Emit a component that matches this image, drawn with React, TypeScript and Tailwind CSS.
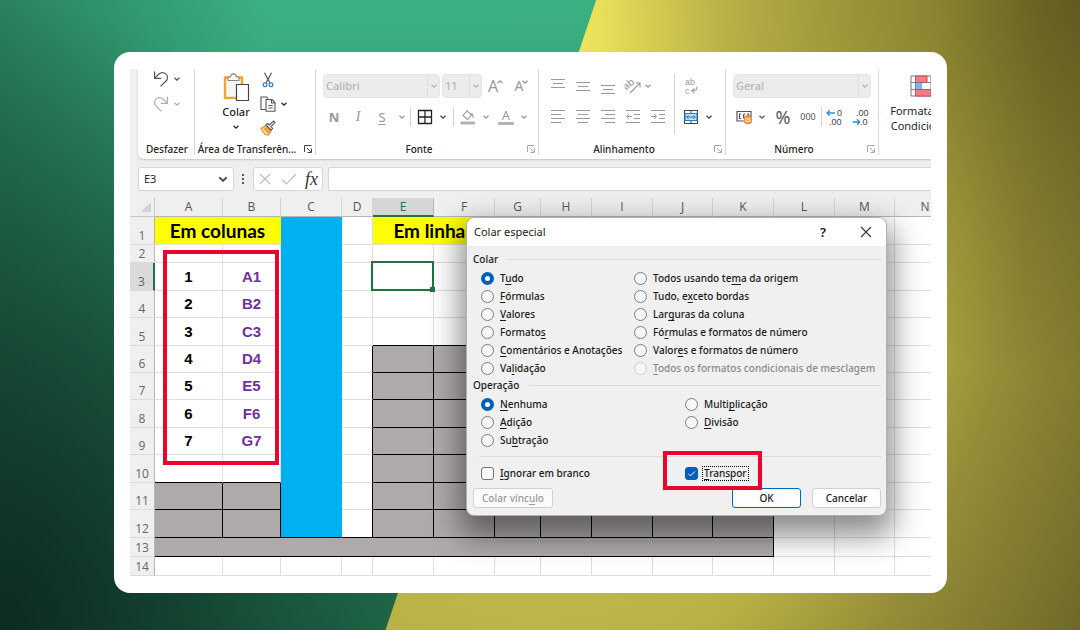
import React, { useState } from 'react';
import clsx from 'clsx';

type IconProps = { className?: string };

const Chevron = ({ className }: IconProps) => (
  <svg viewBox="0 0 8 8" className={clsx('w-2 h-2 shrink-0', className)} fill="none" stroke="currentColor" strokeWidth="1.3">
    <path d="M1.5 2.8 4 5.2 6.5 2.8" />
  </svg>
);

const Launcher = ({ className }: IconProps) => (
  <svg viewBox="0 0 10 10" className={clsx('w-2.5 h-2.5 shrink-0', className)} fill="none" stroke="currentColor">
    <path d="M1.5 8V1.5H8.5M3.8 3.8 8 8M8.5 4.5V8.5H4.5" />
  </svg>
);

const Undo = ({ className }: IconProps) => (
  <svg viewBox="0 0 16 16" className={clsx('w-4 h-4', className)} fill="none" stroke="currentColor" strokeWidth="1.2">
    <path d="M1.6.5v6.8h6.6M1.8 7.1 6 3A4.9 4.9 0 0 1 13 3.1 4.8 4.8 0 0 1 13 10L7.5 15.4" />
  </svg>
);

const Clipboard = () => (
  <svg viewBox="0 0 28 29" className="w-7 h-[29px]" fill="none">
    <path d="M3 4.5H20V25H3Z" fill="#f5f5f5" stroke="#eda53a" strokeWidth="2.4" />
    <path d="M6 7.5V4H8.5C9-.2 14-.2 14.5 4H17V7.5Z" fill="#fff" stroke="#888" strokeWidth="1.1" />
    <path d="M14.5 11.5H26.5V27.5H14.5Z" fill="#fff" stroke="#444" strokeWidth="1.2" />
  </svg>
);

const Scissors = () => (
  <svg viewBox="0 0 12 16" className="w-3 h-4" fill="none">
    <path d="M2.5.8 8 11M9.5.8 4 11" stroke="#555" strokeWidth="1.2" />
    <circle cx="3" cy="12.8" r="1.9" stroke="#2b7cc4" strokeWidth="1.2" />
    <circle cx="9" cy="12.8" r="1.9" stroke="#2b7cc4" strokeWidth="1.2" />
  </svg>
);

const Copy = () => (
  <svg viewBox="0 0 16 16" className="w-4 h-4 shrink-0" fill="none" stroke="#555" strokeWidth="1.1">
    <path d="M5.5 13.5H1V1H6.5L8 2.5" />
    <path d="M6 3.5H12L15 6.5V15.2H6ZM11.5 3.8V7H14.8M8.3 9.5H12.7M8.3 12H12.7" />
  </svg>
);

const Brush = () => (
  <svg viewBox="0 0 16 16" className="w-4 h-4" fill="none">
    <path d="M1 8.5 5.5 5.5 11 11 8.5 15 5 14.5 3.5 12.5Z" fill="#fbd9a5" stroke="#e8912d" strokeWidth="1.2" />
    <path d="M3.5 8.5 8.5 14 10 11 6 7Z" fill="#ef9a38" />
    <path d="M6 5 7.6 3.5 9.5 5 13.5 1 15 2.6 11 6.5 12.6 8.5 11.2 10.2Z" fill="#fff" stroke="#555" strokeWidth="1.1" />
  </svg>
);

const Borders = () => (
  <svg viewBox="0 0 16 16" className="w-4 h-4" fill="none" stroke="#222" strokeWidth="1.3">
    <path d="M1.5 1.5H14.5V14.5H1.5ZM8 1.5V14.5M1.5 8H14.5" />
  </svg>
);

const Bucket = () => (
  <svg viewBox="0 0 16 16" className="w-4 h-4" fill="none" stroke="#9a9a9a" strokeWidth="1.1">
    <path d="M7 2 3 6.5 7.5 10.5 11.5 6 7 2V.8M10.3 5C12 4.2 13 5.5 13 8.8" />
    <path d="M.5 12.5H15V15.5H.5Z" fill="#b3b3b3" stroke="none" />
  </svg>
);

const AlignIcon = ({ d }: { d: string }) => (
  <svg viewBox="0 0 14 16" className="w-3.5 h-4" fill="none" stroke="#9a9a9a">
    <path d={d} />
  </svg>
);

const Orientation = () => (
  <svg viewBox="0 0 18 16" className="w-[18px] h-4 shrink-0 overflow-visible" fill="none" stroke="#9a9a9a" strokeWidth="1.1">
    <text x="0" y="9" fontSize="10" fill="#9a9a9a" stroke="none" transform="rotate(-40 6 8)">ab</text>
    <path d="M6 15 15.5 5.5M11.5 5H16V9.5" />
  </svg>
);

const WrapText = () => (
  <svg viewBox="0 0 16 16" className="w-4 h-4 overflow-visible font-['Liberation_Sans',sans-serif]" fill="none" stroke="#9a9a9a" strokeWidth="1.1">
    <text x="2" y="7" fontSize="9" fill="#9a9a9a" stroke="none">ab</text>
    <text x="2" y="16" fontSize="9" fill="#9a9a9a" stroke="none">c</text>
    <path d="M13.5 8.5C15 11 13.5 12.8 9 12.8M11.5 10.3 8.8 12.8 11.5 15.3" />
  </svg>
);

const Merge = () => (
  <svg viewBox="0 0 16 16" className="w-4 h-4 shrink-0" fill="none">
    <path d="M1.5 1.5H14.5V14.5H1.5Z" fill="#fff" stroke="#444" strokeWidth="1.1" />
    <path d="M2 4.5H14V11.5H2Z" fill="#bfe1f6" stroke="#1f7fc0" strokeWidth="1.1" />
    <path d="M8 1.5V4M8 12V14.5" stroke="#444" />
    <path d="M3.8 8H12.2M5.5 6.2 3.7 8 5.5 9.8M10.5 6.2 12.3 8 10.5 9.8" stroke="#1f6fb0" />
  </svg>
);

const Currency = () => (
  <svg viewBox="0 0 16 14" className="w-4 h-3.5 shrink-0" fill="none">
    <path d="M1 1.5H15V11H1Z" fill="#fff" stroke="#555" strokeWidth="1.2" />
    <path d="M5 4H3.5V8.5H5M9 4.2C6.8 3.5 6.8 9 9 8.3M11 4H12.5V6" stroke="#555" strokeWidth="1.1" />
    <path d="M8.5 7C8.5 5.2 15.3 5.2 15.3 7V12C15.3 14 8.5 14 8.5 12Z" fill="#f6a04a" stroke="#d9771e" />
    <path d="M8.5 8.2C9.5 9.5 14.3 9.5 15.3 8.2M8.5 10.5C9.5 11.8 14.3 11.8 15.3 10.5" stroke="#fff" strokeWidth=".8" />
  </svg>
);

const Decimal = ({ grow }: { grow?: boolean }) => (
  <svg viewBox="0 0 16 16" className="w-4 h-4 overflow-visible font-['Liberation_Sans',sans-serif]" fill="none">
    <text x={grow ? 11 : 4} y="7" fontSize="9" fill="#444">{grow ? '0' : '.00'}</text>
    <text x={grow ? 3 : 8} y="16" fontSize="9" fill="#444">{grow ? '.00' : '.0'}</text>
    <path
      d={grow ? 'M9 4H1.2M3.8 1.2 1 4 3.8 6.8' : 'M.5 13H7.5M5 10.2 7.8 13 5 15.8'}
      stroke="#2b8fd0"
      strokeWidth="1.3"
    />
  </svg>
);

const ConditionalFormat = () => (
  <svg viewBox="0 0 24 22" className="w-6 h-[22px]" fill="none">
    <path d="M2 1H22V21H2Z" fill="#fff" stroke="#777" />
    <path d="M6.5 1H18V7.5H6.5ZM6.5 14.5H22V21H6.5Z" fill="#f77b86" stroke="#d8434f" />
    <path d="M6.5 8H13V14H6.5Z" fill="#7ab8ec" />
    <path d="M2 7.5H22M2 14.5H22M6.5 1V21" stroke="#777" strokeWidth=".9" />
  </svg>
);

const ToolButton = ({ label, className, children }: { label: string; className?: string; children: React.ReactNode }) => (
  <button type="button" aria-label={label} className={clsx('h-6 flex items-center shrink-0', className)}>
    {children}
  </button>
);

const RibbonGroup = ({ title, className, launcher, dim, children }: {
  title: string;
  className?: string;
  launcher?: boolean;
  dim?: boolean;
  children: React.ReactNode;
}) => (
  <section className={clsx('h-[86px] shrink-0 border-r border-[#d8d8d8] flex flex-col justify-between', className)}>
    <div>{children}</div>
    <div className="flex items-center h-3 pr-0.5">
      <h2 className="flex-1 text-center whitespace-nowrap">{title}</h2>
      {launcher && (
        <ToolButton label={`Configurações de ${title}`} className={clsx('pl-1', dim ? 'text-[#aaa]' : 'text-[#444]')}>
          <Launcher />
        </ToolButton>
      )}
    </div>
  </section>
);

const RibbonSelect = ({ label, value, className }: { label: string; value: string; className: string }) => (
  <div className={clsx('h-6 rounded-[4px] bg-[#ececec] border border-[#e6e6e6] flex items-center text-[#b4b4b4] text-[11px]', className)}>
    <select aria-label={label} disabled className="appearance-none flex-1 min-w-0 pl-0.5 opacity-100">
      <option>{value}</option>
    </select>
    <span className="w-3 h-full border-l border-[#dfdfdf] flex items-center justify-center">
      <Chevron />
    </span>
  </div>
);

const Divider = () => <span className="w-px h-5 shrink-0 bg-[#d4d4d4]" />;

const alignments = [
  { label: 'Alinhar à esquerda', d: 'M0 1.5H14M0 5.5H10M0 9.5H14M0 13.5H10' },
  { label: 'Centralizar', d: 'M0 1.5H14M2 5.5H12M0 9.5H14M2 13.5H12' },
  { label: 'Alinhar à direita', d: 'M0 1.5H14M4 5.5H14M0 9.5H14M4 13.5H14' },
  { label: 'Diminuir recuo', d: 'M0 1.5H14M8 5.5H14M8 9.5H14M0 13.5H14M6 7.5H.8M3 5 .8 7.5 3 10' },
  { label: 'Aumentar recuo', d: 'M0 1.5H14M8 5.5H14M8 9.5H14M0 13.5H14M0 7.5H5.5M3.3 5 5.5 7.5 3.3 10' },
];

const verticalAlignments = [
  { label: 'Alinhar em cima', d: 'M0 1.5H14M2 5.5H12M0 9.5H14' },
  { label: 'Alinhar no meio', d: 'M0 4.5H14M2 8.5H12M0 12.5H14' },
  { label: 'Alinhar embaixo', d: 'M0 7.5H14M2 11.5H12M0 15.5H14' },
];

const Ribbon = () => (
  <div className="ml-2 h-[90px] bg-white rounded-bl-md shadow-[0_1px_2px_#c4c4c4] flex overflow-hidden">
    <RibbonGroup title="Desfazer" className="w-[57px] pl-1">
      <div className="flex items-start pl-[11px] pt-0.5 text-[#555] h-6">
        <Undo />
        <Chevron className="ml-1 mt-1" />
      </div>
      <div className="flex items-start pl-[11px] pt-[3px] text-[#b0b0b0]">
        <Undo className="-scale-x-100" />
        <Chevron className="ml-1 mt-1" />
      </div>
    </RibbonGroup>

    <RibbonGroup title="Área de Transferên..." launcher className="w-[121px]">
      <div className="flex pl-[25px]">
        <button type="button" className="w-8 pt-1 flex flex-col items-center">
          <Clipboard />
          <span className="text-[11px] leading-4 mt-0.5">Colar</span>
          <Chevron className="mt-[3px]" />
        </button>
        <div className="ml-1 -mt-px flex flex-col">
          <ToolButton label="Recortar" className="w-6 justify-center"><Scissors /></ToolButton>
          <ToolButton label="Copiar" className="w-10 gap-1 pl-1"><Copy /><Chevron /></ToolButton>
          <ToolButton label="Pincel de formatação" className="w-6 justify-center"><Brush /></ToolButton>
        </div>
      </div>
    </RibbonGroup>

    <RibbonGroup title="Fonte" launcher dim className="w-[223px]">
      <div className="flex items-center pl-[7px] pt-[5px]">
        <RibbonSelect label="Fonte" value="Calibri" className="w-[117px]" />
        <RibbonSelect label="Tamanho" value="11" className="w-10 ml-0.5" />
        <ToolButton label="Aumentar fonte" className="w-6 ml-0.5 justify-center text-[#999] text-[16px] font-normal">A<Chevron className="rotate-180 mb-2 -ml-0.5" /></ToolButton>
        <ToolButton label="Diminuir fonte" className="w-6 ml-0.5 justify-center text-[#999] text-[14px] font-normal">A<Chevron className="mb-2 -ml-0.5" /></ToolButton>
      </div>
      <div className="flex items-center pl-[6px] pt-[7px] text-[#999] text-[13px] font-normal">
        <ToolButton label="Negrito" className="w-6 justify-center font-bold">N</ToolButton>
        <ToolButton label="Itálico" className="w-6 justify-center italic font-['Liberation_Serif',serif] text-[14px]">I</ToolButton>
        <ToolButton label="Sublinhado" className="w-6 justify-center underline underline-offset-2">S</ToolButton>
        <ToolButton label="Opções de sublinhado" className="w-4 justify-center"><Chevron /></ToolButton>
        <Divider />
        <ToolButton label="Bordas" className="w-7 justify-center"><Borders /></ToolButton>
        <ToolButton label="Opções de bordas" className="w-3 text-[#444]"><Chevron /></ToolButton>
        <span className="w-0.5" />
        <Divider />
        <ToolButton label="Cor de preenchimento" className="w-7 justify-center"><Bucket /></ToolButton>
        <ToolButton label="Opções de preenchimento" className="w-2"><Chevron /></ToolButton>
        <span className="w-0.5" />
        <ToolButton label="Cor da fonte" className="w-7 justify-center">
          <span className="w-4 h-4 border-b-3 border-[#b3b3b3] leading-3 text-center">A</span>
        </ToolButton>
        <ToolButton label="Opções de cor da fonte" className="w-2"><Chevron /></ToolButton>
      </div>
    </RibbonGroup>

    <RibbonGroup title="Alinhamento" launcher dim className="w-[187px]">
      <div className="flex pl-[6px] pt-[5px]">
        <div className="w-[129px]">
          <div className="flex text-[#999]">
            {verticalAlignments.map((item) => (
              <ToolButton key={item.label} label={item.label} className="w-[25px] justify-center"><AlignIcon d={item.d} /></ToolButton>
            ))}
            <ToolButton label="Orientação" className="w-9 justify-center"><Orientation /><Chevron className="ml-0.5" /></ToolButton>
          </div>
          <div className="flex pt-[7px]">
            {alignments.map((item) => (
              <ToolButton key={item.label} label={item.label} className="w-[25px] justify-center"><AlignIcon d={item.d} /></ToolButton>
            ))}
          </div>
        </div>
        <div className="border-l border-[#d4d4d4] h-[60px] pl-1 flex flex-col gap-[7px]">
          <ToolButton label="Quebrar texto" className="w-6 justify-center"><WrapText /></ToolButton>
          <ToolButton label="Mesclar e centralizar" className="w-10 pl-1 gap-1.5"><Merge /><Chevron className="text-[#444]" /></ToolButton>
        </div>
      </div>
    </RibbonGroup>

    <RibbonGroup title="Número" launcher dim className="w-[153px]">
      <div className="pl-[7px] pt-[5px]">
        <RibbonSelect label="Formato de número" value="Geral" className="w-[138px]" />
      </div>
      <div className="flex items-center pl-[9px] pt-[7px] text-[#555] font-normal">
        <ToolButton label="Formato de contabilização" className="w-8 gap-1.5 pl-px"><Currency /><Chevron /></ToolButton>
        <ToolButton label="Porcentagem" className="w-8 justify-center text-[18px]">%</ToolButton>
        <ToolButton label="Separador de milhares" className="w-[18px] justify-center text-[9px]">000</ToolButton>
        <span className="w-1" />
        <Divider />
        <ToolButton label="Aumentar casas decimais" className="w-6 justify-center"><Decimal grow /></ToolButton>
        <ToolButton label="Diminuir casas decimais" className="w-7 justify-center"><Decimal /></ToolButton>
      </div>
    </RibbonGroup>

    <button type="button" className="shrink-0 w-[84px] h-16 pt-1.5 flex flex-col items-center text-[11px]">
      <ConditionalFormat />
      <span className="mt-1.5 leading-[15px] font-normal">Formatação<br />Condicional</span>
    </button>
  </div>
);

const FormulaBar = () => (
  <div className="flex ml-2 mt-2 h-6">
    <div className="w-24 bg-white border border-[#d6d6d6] rounded-[3px] flex items-center pr-1">
      <input aria-label="Caixa de nome" defaultValue="E3" className="flex-1 min-w-0 pl-[5px] text-[11px] font-normal outline-none" />
      <Chevron className="w-3 h-3 text-[#555]" />
    </div>
    <svg viewBox="0 0 4 12" className="w-1 h-3 ml-[7px] mr-2 self-center" fill="#555">
      <path d="M1 1H3V3H1ZM1 5H3V7H1ZM1 9H3V11H1Z" />
    </svg>
    <div className="w-[70px] bg-white border border-[#d6d6d6] rounded-[3px] flex items-center justify-between pl-1 pr-1">
      <button type="button" aria-label="Cancelar edição">
        <svg viewBox="0 0 14 14" className="w-3.5 h-3.5" stroke="#bbb" strokeWidth="1.1"><path d="M2 2 12 12M12 2 2 12" /></svg>
      </button>
      <button type="button" aria-label="Confirmar">
        <svg viewBox="0 0 16 14" className="w-4 h-3.5" stroke="#bbb" strokeWidth="1.1" fill="none"><path d="M1 7.5 5.5 12 15 2" /></svg>
      </button>
      <button type="button" className="font-['Liberation_Serif',serif] italic text-[18px] leading-5 text-[#333]">fx</button>
    </div>
    <input aria-label="Barra de fórmulas" className="flex-1 min-w-0 ml-[5px] bg-white border border-r-0 border-[#d6d6d6] rounded-l-[3px] outline-none" />
  </div>
);

const columns = [
  { name: 'A', width: 'w-[68px]' },
  { name: 'B', width: 'w-[58px]' },
  { name: 'C', width: 'w-[61px]' },
  { name: 'D', width: 'w-[31px]' },
  { name: 'E', width: 'w-[61px]' },
  { name: 'F', width: 'w-[61px]' },
  { name: 'G', width: 'w-[46px]' },
  { name: 'H', width: 'w-[51px]' },
  { name: 'I', width: 'w-[61px]' },
  { name: 'J', width: 'w-[60px]' },
  { name: 'K', width: 'w-[61px]' },
  { name: 'L', width: 'w-[61px]' },
  { name: 'M', width: 'w-[60px]' },
  { name: 'N', width: 'w-[61px]' },
];

const rows = [
  'h-[28px]', 'h-[18px]', 'h-[28px]', 'h-[27px]', 'h-[28px]', 'h-[27px]', 'h-[27px]',
  'h-[28px]', 'h-[27px]', 'h-[28px]', 'h-[27px]', 'h-[28px]', 'h-[19px]', 'h-[19px]',
];

const values = ['A1', 'B2', 'C3', 'D4', 'E5', 'F6', 'G7'];

const isGray = (row: number, col: string) =>
  (row >= 11 && row <= 12 && col <= 'B') || (row >= 6 && row <= 12 && col >= 'E' && col <= 'K');

const cellClass = (row: number, col: string) => {
  if (row === 13 && col === 'A') return 'bg-[#aeaaa9] border-black';
  if (isGray(row, col)) return 'bg-[#aeaaa9] border-black';
  if (col === 'C' && row <= 12) return clsx('bg-[#00b0f0] border-r-[#00b0f0]', row === 12 ? 'border-b-black' : 'border-b-[#00b0f0]');
  if (row === 1 && (col <= 'B' || (col >= 'E' && col <= 'K'))) return 'bg-[#ffff00] border-r-[#ffff00] border-b-[#e4e4c0]';
  return clsx(
    isGray(row + 1, col) || (row === 12 && col === 'D') ? 'border-b-black' : 'border-b-[#dedede]',
    col === 'D' && row >= 6 && row <= 12 ? 'border-r-black' : 'border-r-[#dedede]',
  );
};

const Cell = ({ row, col }: { row: number; col: string }) => {
  let span = 1;
  let content: React.ReactNode = null;

  if (row === 1 && (col === 'A' || col === 'E')) {
    span = 2;
    content = <span className="font-['Lato',sans-serif] text-[19px] leading-6">{col === 'A' ? 'Em colunas' : 'Em linhas'}</span>;
  }
  if (row === 13 && col === 'A') span = 11;
  if (row >= 3 && row <= 9 && col === 'A') content = row - 2;
  if (row >= 3 && row <= 9 && col === 'B') content = <span className="text-[#7030a0]">{values[row - 3]}</span>;
  if (row === 3 && col === 'E') {
    content = (
      <span className="absolute -inset-px -left-[2px] -top-[2px] border-2 border-[#217346]">
        <span className="absolute -right-[3px] -bottom-[3px] w-[5px] h-[5px] bg-[#217346]" />
      </span>
    );
  }

  return (
    <td
      colSpan={span}
      className={clsx(
        'relative p-0 border-r border-b text-center align-middle font-bold text-[15px] leading-4 text-black whitespace-nowrap',
        row === 3 && col === 'E' && 'z-10',
        cellClass(row, col),
      )}
    >
      {content}
    </td>
  );
};

const isCovered = (row: number, col: string) =>
  (row === 1 && (col === 'B' || col === 'F')) || (row === 13 && col > 'A' && col <= 'K');

const Sheet = () => (
  <div className="relative mt-[7px] overflow-hidden">
    <table className="table-fixed w-[826px] border-separate border-spacing-0 bg-white font-['Liberation_Sans',Arial,sans-serif]">
      <thead>
        <tr className="h-[19px] font-['Open_Sans',sans-serif] text-[12px] leading-4 text-[#555]">
          <th aria-label="Selecionar tudo" className="w-[25px] p-0 bg-[#efefef] border-r border-b border-[#c8c8c8]">
            <svg viewBox="0 0 12 12" className="w-3 h-3 ml-auto mr-0.5" fill="#d3d3d3"><path d="M11 1V11H1Z" /></svg>
          </th>
          {columns.map((col) => (
            <th
              key={col.name}
              className={clsx(
                'p-0 font-normal border-r',
                col.width,
                col.name === 'E'
                  ? 'bg-[#d6d6d6] text-[#217346] border-r-[#b5b5b5] border-b-2 border-b-[#217346]'
                  : 'bg-[#efefef] border-r-[#d4d4d4] border-b border-b-[#b5b5b5]',
              )}
            >
              {col.name}
            </th>
          ))}
        </tr>
      </thead>
      <tbody>
        {rows.map((height, index) => (
          <tr key={index} className={height}>
            <th
              className={clsx(
                "p-0 font-normal align-bottom font-['Open_Sans',sans-serif] text-[12px] leading-4 border-b border-b-[#dcdcdc]",
                index === 2
                  ? 'bg-[#dadada] text-[#666] border-r-2 border-r-[#217346]'
                  : 'bg-[#efefef] text-[#666] border-r border-r-[#b5b5b5]',
              )}
            >
              {index + 1}
            </th>
            {columns
              .filter((col) => !isCovered(index + 1, col.name))
              .map((col) => (
                <Cell key={col.name} row={index + 1} col={col.name} />
              ))}
          </tr>
        ))}
      </tbody>
    </table>
    {/* destaque sobre a tabela de origem */}
    <div className="absolute left-[33px] top-[52px] w-[116px] h-[215px] border-4 border-[#e8062f]" />
  </div>
);

// O caractere logo depois de "_" é a tecla de atalho
const Accel = ({ text }: { text: string }) => {
  const [before, after] = text.split('_');
  return (
    <span className="whitespace-nowrap">
      {before}
      {after && <u className="underline-offset-2">{after[0]}</u>}
      {after?.slice(1)}
    </span>
  );
};

const RadioOption = ({ name, text, checked, disabled, onChange }: {
  name: string;
  text: string;
  checked: boolean;
  disabled?: boolean;
  onChange: () => void;
}) => (
  <label className={clsx('h-[18px] flex items-center gap-1.5', disabled && 'text-[#8a8a8a]')}>
    <input
      type="radio"
      name={name}
      checked={checked}
      disabled={disabled}
      onChange={onChange}
      className="appearance-none w-[13px] h-[13px] shrink-0 rounded-full border border-[#7c7c7c] bg-[#f7f7f7] checked:border-4 checked:border-[#005fb8] checked:bg-white disabled:border-[#cfcfcf]"
    />
    <Accel text={text} />
  </label>
);

const Legend = ({ children }: { children: React.ReactNode }) => (
  <legend className="w-full h-4 mb-0.5 flex items-center gap-2.5">
    {children}
    <span className="flex-1 h-px bg-[#dcdcdc]" />
  </legend>
);

const pasteLeft = ['T_udo', '_Fórmulas', '_Valores', 'Formato_s', '_Comentários e Anotações', 'Va_lidação'];
const pasteRight = [
  'Todos usando te_ma da origem',
  'Tudo, e_xceto bordas',
  'Lar_guras da coluna',
  'Fó_rmulas e formatos de número',
  'Valor_es e formatos de número',
  '_Todos os formatos condicionais de mesclagem',
];
const operationLeft = ['_Nenhuma', '_Adição', 'Su_btração'];
const operationRight = ['Multi_plicação', '_Divisão'];

const PasteSpecialDialog = () => {
  const [paste, setPaste] = useState('T_udo');
  const [operation, setOperation] = useState('_Nenhuma');
  const [skipBlanks, setSkipBlanks] = useState(false);
  const [transpose, setTranspose] = useState(true);

  const renderOptions = (name: string, options: string[], current: string, onSelect: (value: string) => void) => (
    <div>
      {options.map((text) => (
        <RadioOption
          key={text}
          name={name}
          text={text}
          checked={current === text}
          disabled={text.startsWith('_Todos')}
          onChange={() => onSelect(text)}
        />
      ))}
    </div>
  );

  return (
    <div
      role="dialog"
      aria-labelledby="dialog-title"
      className="absolute z-20 left-[336px] top-[148px] w-[421px] rounded-lg bg-[#f0f0f0] border border-[#b0b0b0] text-[#1a1a1a] shadow-[0_14px_30px_6px_rgba(0,0,0,0.45)]"
    >
      <div className="h-7 flex items-center bg-white rounded-t-lg pl-[7px] pr-3.5">
        <h1 id="dialog-title" className="flex-1 text-[11px] font-normal">Colar especial</h1>
        <button type="button" aria-label="Ajuda" className="w-6 text-[13px] font-semibold">?</button>
        <button type="button" aria-label="Fechar" className="ml-[25px]">
          <svg viewBox="0 0 12 12" className="w-3 h-3" stroke="#333" strokeWidth="1.1"><path d="M1 1 11 11M11 1 1 11" /></svg>
        </button>
      </div>

      <form className="pl-1.5 pr-[5px] pt-[5px] pb-[7px]" onSubmit={(e) => e.preventDefault()}>
        <fieldset>
          <Legend>Colar</Legend>
          <div className="grid grid-cols-[153px_1fr] pl-2">
            {renderOptions('paste', pasteLeft, paste, setPaste)}
            {renderOptions('paste', pasteRight, paste, setPaste)}
          </div>
        </fieldset>
        <fieldset>
          <Legend>Operação</Legend>
          <div className="grid grid-cols-[204px_1fr] pl-2">
            {renderOptions('operation', operationLeft, operation, setOperation)}
            {renderOptions('operation', operationRight, operation, setOperation)}
          </div>
        </fieldset>

        <div className="mt-[7px] ml-1.5 border-t border-[#dcdcdc]" />
        <div className="mt-[7px] grid grid-cols-[204px_1fr] pl-2">
          <label className="h-[18px] flex items-center gap-1.5">
            <input
              type="checkbox"
              checked={skipBlanks}
              onChange={(e) => setSkipBlanks(e.target.checked)}
              className="appearance-none w-[13px] h-[13px] rounded-[3px] border border-[#757575] bg-[#f7f7f7] checked:bg-[#005fb8] checked:border-[#005fb8]"
            />
            <Accel text="_Ignorar em branco" />
          </label>
          <label className="h-[18px] flex items-center gap-1">
            <span className="relative flex">
              <input
                type="checkbox"
                checked={transpose}
                onChange={(e) => setTranspose(e.target.checked)}
                className="appearance-none w-[13px] h-[13px] rounded-[3px] border border-[#757575] checked:bg-[#005fb8] checked:border-[#005fb8]"
              />
              <svg viewBox="0 0 13 13" className="absolute inset-0 pointer-events-none" fill="none" stroke="#fff">
                <path d="M3.3 6.7 5.5 8.9 9.8 4.5" />
              </svg>
            </span>
            <span className="px-px border border-dotted border-black leading-[13px]"><Accel text="_Transpor" /></span>
          </label>
        </div>

        <div className="mt-1.5 flex">
          <button type="button" disabled className="w-20 h-5 rounded-[3px] bg-[#fbfbfb] border border-[#d0d0d0] text-[#9a9a9a]">
            <Accel text="Colar vínc_ulo" />
          </button>
          <button type="submit" className="w-[69px] h-5 ml-auto rounded-[3px] bg-[#fdfdfd] border border-[#0067c0]">OK</button>
          <button type="button" className="w-[69px] h-5 ml-[11px] rounded-[3px] bg-[#fdfdfd] border border-[#d0d0d0]">Cancelar</button>
        </div>
      </form>

      {/* destaque sobre "Transpor" */}
      <div className="absolute left-[196px] top-[233px] w-[99px] h-[39px] border-4 border-[#e8062f] pointer-events-none" />
    </div>
  );
};

const App = () => {
  return (
    <div className="relative min-h-screen overflow-hidden bg-[radial-gradient(ellipse_45%_100%_at_0%_100%,#0d2b20,#0d2b2000),linear-gradient(to_right,#0f3c2866,#0f3c2800_25%),linear-gradient(#3bb183,#22704f)] pl-[114px] pr-[133px] pt-[52px] pb-[37px]">
      <div className="absolute inset-0 [clip-path:polygon(55.2%_0,100%_0,100%_100%,35.7%_100%)] bg-[radial-gradient(ellipse_45%_60%_at_100%_0%,#3c370f88,#3c370f00),radial-gradient(ellipse_65%_180%_at_50%_5%,#f2e960_0%,#e9e05a_9%,#cbc350_28%,#b8b245_57%,#938c37_72%,#6c6628_95%,#625d24_100%)]" />
      <main className="relative bg-white rounded-[16px] px-4 py-[17px]">
        <div className="relative overflow-hidden bg-[#efefef] font-['Noto_Sans','Open_Sans',sans-serif] font-medium text-[10px] leading-4 text-[#262626]">
          <Ribbon />
          <FormulaBar />
          <Sheet />
          <PasteSpecialDialog />
        </div>
      </main>
    </div>
  );
};

export default App;
